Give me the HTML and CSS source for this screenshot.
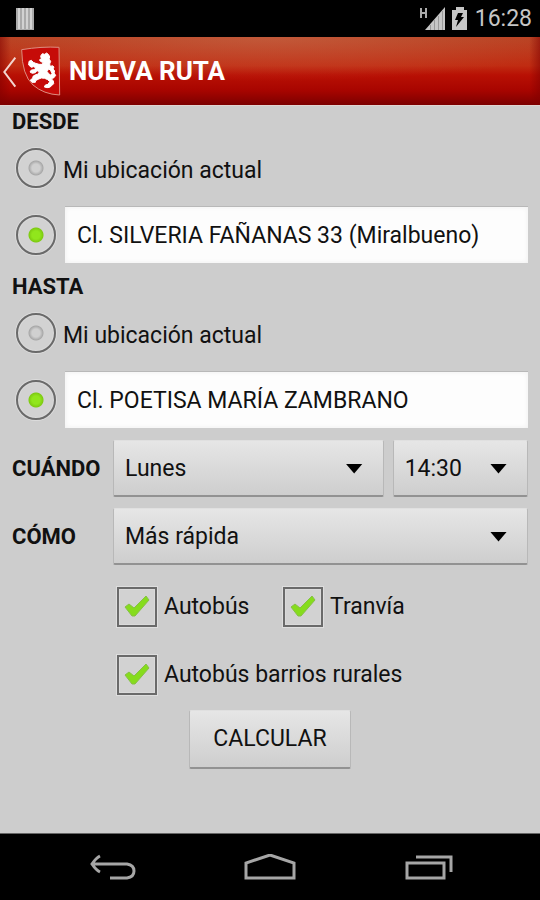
FILE: index.html
```html
<!DOCTYPE html>
<html lang="es">
<head>
<meta charset="utf-8">
<meta name="viewport" content="width=device-width, initial-scale=1">
<title>Nueva ruta</title>
<link rel="stylesheet" href="styles.css">
</head>
<body>
<div class="screen">
  <div class="status">
    <svg class="status-bars" width="18" height="22" viewBox="0 0 18 22" aria-hidden="true">
      <path fill="#aaa" d="M0 0h18v22H0z"/>
      <path stroke="#d2d2d2" stroke-width="2" d="M3 0v21M7 0v21M11 0v21M15 0v21"/>
    </svg>
    <div class="status-right">
      <svg width="48" height="26" viewBox="0 0 48 26" aria-hidden="true">
        <path fill="none" stroke="#aaa" stroke-width="2" d="M2 2v10M7 2v10M2 7h5"/>
        <path fill="#c6c6c6" d="M26 1v23H6z"/>
        <path stroke="#999" d="M11.500 19v5M15.500 14v10M19.500 10v14M23.500 5v19"/>
        <path fill="#c6c6c6" d="M37 1h8v3h3v20H33V4h4z"/>
        <path fill="#000" d="M39 7h5l-2 4h3l-8 10 2-7h-3z"/>
      </svg>
      <span class="clock">16:28</span>
    </div>
  </div>

  <header class="appbar">
    <a class="up" href="#" aria-label="Volver">
      <svg width="61" height="52" viewBox="0 0 183 156" aria-hidden="true">
        <path fill="none" stroke="#f3d5cf" stroke-width="6" d="M46 38L13 81l33 44"/>
        <path fill="#c60b08" stroke="#dd8d80" stroke-width="3" d="M65 14q60-10 112-7l2 143q-48-2-80-30Q66 90 65 14z"/>
        <path fill="#fff" stroke="#fff" stroke-width="3" stroke-linejoin="round" d="M122 33L127 26L134 28L140 24L146 29L149 36L147 42L152 49L149 57L151 65L146 73L141 79L146 86L153 91L156 85L152 77L147 72L150 65L157 62L162 66L159 72L164 78L162 84L167 91L162 98L154 101L160 108L161 116L155 122L149 127L141 128L133 126L136 120L144 118L149 110L143 104L134 100L124 99L114 103L107 107L106 112L96 112L91 105L98 100L99 94L107 89L115 87L118 80L111 77L106 83L97 85L90 81L94 75L102 74L108 69L101 65L94 67L86 60L87 49L94 46L100 52L107 55L117 58L126 58L130 53L123 50L118 45L124 42z"/>
      </svg>
    </a>
    <h1 class="title">NUEVA RUTA</h1>
  </header>

  <main class="content">
    <form class="form">
      <fieldset class="place">
        <legend class="heading">DESDE</legend>
        <div class="option">
          <input class="radio" type="radio" name="desde" id="desde-aqui">
          <label for="desde-aqui">Mi ubicación actual</label>
        </div>
        <div class="address">
          <input class="radio" type="radio" name="desde" aria-label="Desde una dirección" checked>
          <input class="field" type="text" aria-label="Dirección de origen" value="Cl. SILVERIA FAÑANAS 33 (Miralbueno)">
        </div>
      </fieldset>

      <fieldset class="place">
        <legend class="heading">HASTA</legend>
        <div class="option">
          <input class="radio" type="radio" name="hasta" id="hasta-aqui">
          <label for="hasta-aqui">Mi ubicación actual</label>
        </div>
        <div class="address">
          <input class="radio" type="radio" name="hasta" aria-label="Hasta una dirección" checked>
          <input class="field" type="text" aria-label="Dirección de destino" value="Cl. POETISA MARÍA ZAMBRANO">
        </div>
      </fieldset>

      <div class="choices">
        <label class="heading" for="dia">CUÁNDO</label>
        <div class="pickers">
          <div class="picker">
            <select id="dia"><option>Lunes</option></select>
          </div>
          <div class="picker">
            <select aria-label="Hora"><option>14:30</option></select>
          </div>
        </div>
        <label class="heading" for="modo">CÓMO</label>
        <div class="picker">
          <select id="modo"><option>Más rápida</option></select>
        </div>
      </div>

      <div class="modes">
        <label class="mode">
          <span class="tick">
            <input type="checkbox" checked>
            <svg viewBox="0 0 26 24" width="26" height="24" aria-hidden="true"><path d="M1 12l4-3 5 4L22 1l3 4L11 21H8z"/></svg>
          </span>
          Autobús
        </label>
        <label class="mode">
          <span class="tick">
            <input type="checkbox" checked>
            <svg viewBox="0 0 26 24" width="26" height="24" aria-hidden="true"><path d="M1 12l4-3 5 4L22 1l3 4L11 21H8z"/></svg>
          </span>
          Tranvía
        </label>
        <label class="mode wide">
          <span class="tick">
            <input type="checkbox" checked>
            <svg viewBox="0 0 26 24" width="26" height="24" aria-hidden="true"><path d="M1 12l4-3 5 4L22 1l3 4L11 21H8z"/></svg>
          </span>
          Autobús barrios rurales
        </label>
      </div>

      <button class="submit" type="button">CALCULAR</button>
    </form>
  </main>

  <nav class="navbar">
    <button type="button" aria-label="Atrás">
      <svg width="52" height="30" viewBox="0 0 52 30" aria-hidden="true"><path d="M16 2q-4 2-8 8 4 6 8 8M8 10h35q7 1 7 7t-7 7H26"/></svg>
    </button>
    <button type="button" aria-label="Inicio">
      <svg width="52" height="30" viewBox="0 0 52 30" aria-hidden="true"><path d="M2 24V9L26 1l24 8v15z"/></svg>
    </button>
    <button type="button" aria-label="Recientes">
      <svg width="52" height="30" viewBox="0 0 52 30" aria-hidden="true"><path d="M3 9h37v15H3zM12 3h35v15"/></svg>
    </button>
  </nav>
</div>
</body>
</html>
```
FILE: styles.css
```css
* {
  box-sizing: border-box;
}

body {
  margin: 0;
  background: #cdcdcd;
  color: #111;
  font: 23px/28px Roboto, "Liberation Sans", sans-serif;
}

input,
select,
button {
  appearance: none;
  margin: 0;
  border: 0;
  border-radius: 0;
  color: inherit;
  font: inherit;
}

.screen {
  display: flex;
  flex-direction: column;
  min-height: 100vh;
}

.status {
  display: flex;
  align-items: center;
  justify-content: space-between;
  height: 37px;
  padding: 0 8px 0 16px;
  background: #000;
  color: #c6c6c6;
}

.status-right {
  display: flex;
  align-items: center;
  gap: 8px;
}

.clock {
  font-size: 23px;
}

.appbar {
  display: flex;
  align-items: center;
  gap: 8px;
  height: 69px;
  border-bottom: 1px solid #e0d5d2;
  background:
    linear-gradient(90deg, #80000088, transparent 2%, transparent 98%, #80000088),
    radial-gradient(ellipse 320px 44px at 50% 0, #d0806066, transparent),
    linear-gradient(#b84020, #c02c12 42%, #b81004 56%, #a80500 78%, #7c0000);
}

.up {
  display: flex;
}

.title {
  margin: 0;
  color: #fff;
  font-size: 26px;
  font-weight: 700;
}

.content {
  flex: 1;
  padding: 0 12px;
}

.form {
  display: flex;
  flex-direction: column;
}

.place {
  min-width: 0;
  margin: 0;
  padding: 0 0 8px;
  border: 0;
}

.heading {
  padding: 0;
  font-size: 22px;
  line-height: 32px;
  font-weight: 700;
}

.option,
.address {
  display: flex;
  align-items: center;
  padding-left: 4px;
}

.option {
  gap: 7px;
  height: 60px;
}

.option label {
  padding-top: 5px;
}

.address {
  gap: 9px;
  margin-top: 8px;
}

.radio {
  flex: none;
  width: 40px;
  height: 40px;
  border: 2px solid #6a6a6a;
  border-radius: 50%;
  background: radial-gradient(circle at 50% 50%, #d0d0d0 4px, #a8a8a8 7px, #d2d2d2 8px);
  box-shadow: 0 0 0 1px #dcdcdc, inset 0 0 0 1px #dadada;
}

.radio:checked {
  background: radial-gradient(circle at 50% 50%, #91e61c 4px, #7ecb12 7px, #d2d2d2 8px);
}

.field {
  flex: 1;
  min-width: 0;
  height: 57px;
  padding: 0 12px;
  border-top: 1px solid #b8b8b8;
  background: #fdfdfd;
  box-shadow: inset 0 0 5px #eee;
}

.choices {
  display: grid;
  grid-template-columns: 92px 1fr;
  align-items: center;
  gap: 11px 9px;
  padding: 4px 0 0;
}

.pickers {
  display: grid;
  grid-template-columns: 2fr 1fr;
  gap: 9px;
}

.picker {
  display: grid;
  align-items: center;
}

.picker select {
  grid-area: 1 / 1;
  width: 100%;
  padding: 2px 11px 0;
}

.picker::after {
  content: "";
  grid-area: 1 / 1;
  justify-self: end;
  width: 17px;
  height: 10px;
  margin-right: 21px;
  background: #000;
  clip-path: polygon(0 0, 100% 0, 50% 100%);
  pointer-events: none;
}

.picker select,
.submit {
  height: 57px;
  border: 1px solid #b8b8b8;
  border-top-color: #e0e0e0;
  border-bottom: 2px solid #929292;
  border-radius: 2px;
  background: linear-gradient(#e6e6e6, #cecece);
}

.modes {
  display: grid;
  grid-template-columns: 166px 1fr;
  gap: 28px 0;
  margin: 22px 0 0 105px;
}

.mode {
  display: flex;
  align-items: center;
  gap: 7px;
}

.wide {
  grid-column: 1 / -1;
}

.tick {
  display: grid;
  place-items: center;
}

.tick input,
.tick svg {
  grid-area: 1 / 1;
}

.tick input {
  width: 40px;
  height: 40px;
  border: 2px solid #6a6a6a;
  background: #d2d2d2;
  box-shadow: 0 0 0 1px #dedede, inset 0 0 0 1px #dadada;
}

.tick svg {
  visibility: hidden;
  fill: #86dc1d;
  stroke: #86c045;
  pointer-events: none;
}

.tick input:checked + svg {
  visibility: visible;
}

.submit {
  align-self: center;
  height: 59px;
  margin-top: 15px;
  padding: 0 23px;
}

.navbar {
  display: grid;
  grid-template-columns: repeat(3, 160px);
  justify-content: center;
  height: 67px;
  border-top: 1px solid #666;
  background: #000;
}

.navbar button {
  display: grid;
  place-items: center;
  padding: 4px 0 0;
  background: none;
}

.navbar svg {
  fill: none;
  stroke: #a6a6a6;
  stroke-width: 3px;
}
```
